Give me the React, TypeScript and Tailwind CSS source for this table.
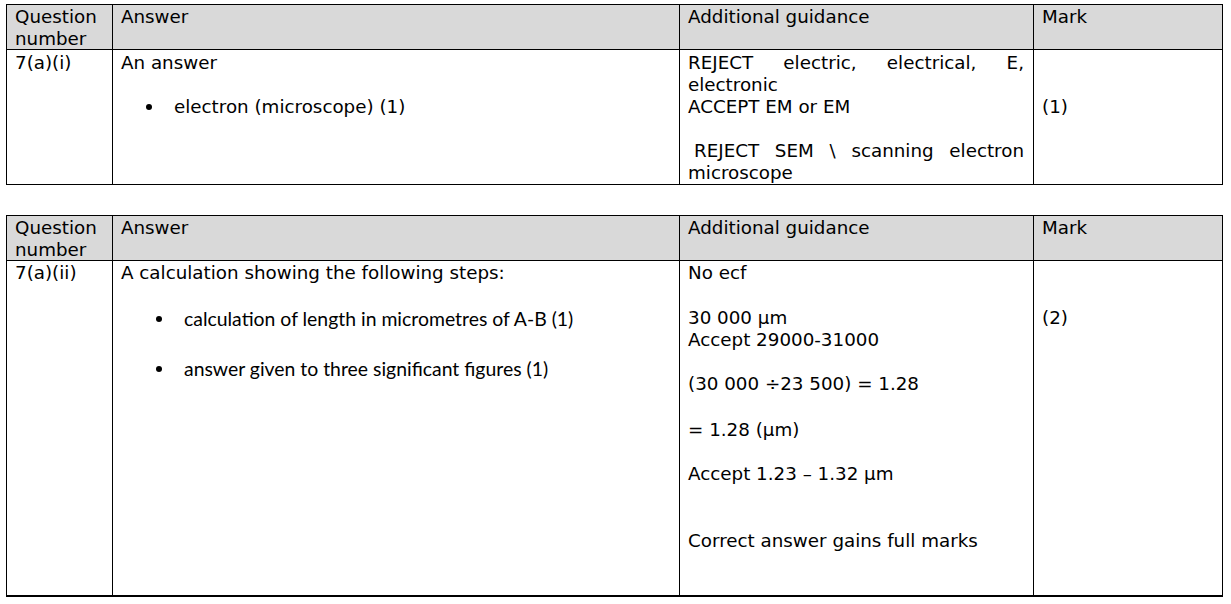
import React from "react";

const cell = "border-r border-b border-black px-[8px]";

function Header() {
  return (
    <>
      <div className={`${cell} bg-[#d9d9d9] h-[45px] pt-[1px] leading-[22px]`}>Question number</div>
      <div className={`${cell} bg-[#d9d9d9] h-[45px] pt-[1px] leading-[22px]`}>Answer</div>
      <div className={`${cell} bg-[#d9d9d9] h-[45px] pt-[1px] leading-[22px]`}>Additional guidance</div>
      <div className={`${cell} bg-[#d9d9d9] h-[45px] pt-[1px] leading-[22px]`}>Mark</div>
    </>
  );
}

function Bullet({ children, dotLeft, className }: { children: React.ReactNode; dotLeft: string; className?: string }) {
  return (
    <div className={`flex items-center h-[22px] ${className ?? ""}`}>
      <span className={`${dotLeft} w-[6px] h-[6px] rounded-full bg-black shrink-0`} />
      <span className="ml-[22px] leading-[22px] whitespace-nowrap">{children}</span>
    </div>
  );
}

export default function App() {
  return (
    <div className="bg-white w-[1231px] h-[604px] overflow-hidden text-black text-[18.3px] font-['DejaVu_Sans',sans-serif] pt-[4px]">
      {/* Table 1 */}
      <div className="ml-[6px] w-[1217px] border-l border-t border-black grid grid-cols-[106px_567px_354px_189px]">
        <Header />
        <div className={`${cell} h-[135px] pt-[2px] leading-[22px]`}>7(a)(i)</div>
        <div className={`${cell} h-[135px] pt-[2px] leading-[22px]`}>
          <div>An answer</div>
          <Bullet dotLeft="ml-[25px]" className="mt-[22px]">electron (microscope) (1)</Bullet>
        </div>
        <div className={`${cell} h-[135px] pt-[2px] leading-[22px] pr-[9px]`}>
          <div className="text-justify [text-align-last:justify]">REJECT electric, electrical, E,</div>
          <div>electronic</div>
          <div>ACCEPT EM or EM</div>
          <div className="mt-[22px] pl-[6px] text-justify [text-align-last:justify]">REJECT SEM \ scanning electron</div>
          <div>microscope</div>
        </div>
        <div className={`${cell} h-[135px] pt-[46px] leading-[22px]`}>(1)</div>
      </div>

      {/* Table 2 */}
      <div className="mt-[30px] ml-[6px] w-[1217px] border-l border-t border-black grid grid-cols-[106px_567px_354px_189px]">
        <Header />
        <div className="border-r border-b-2 border-black px-[8px] h-[336px] pt-[1px] leading-[22px]">7(a)(ii)</div>
        <div className="border-r border-b-2 border-black px-[8px] h-[336px] pt-[1px] leading-[22px]">
          <div>A calculation showing the following steps:</div>
          <div className="font-['Lato',sans-serif] text-[19.4px]">
            <Bullet dotLeft="ml-[35px]" className="mt-[24px]">calculation of length in micrometres of A-B (1)</Bullet>
            <Bullet dotLeft="ml-[35px]" className="mt-[28px]">answer given to three significant figures (1)</Bullet>
          </div>
        </div>
        <div className="border-r border-b-2 border-black px-[8px] h-[336px] pt-[1px] leading-[22px]">
          <div>No ecf</div>
          <div className="mt-[23px]">30 000 µm</div>
          <div>Accept 29000-31000</div>
          <div className="mt-[22px]">(30 000 ÷23 500) = 1.28</div>
          <div className="mt-[24px]">= 1.28 (µm)</div>
          <div className="mt-[22px]">Accept 1.23 – 1.32 µm</div>
          <div className="mt-[45px]">Correct answer gains full marks</div>
        </div>
        <div className="border-r border-b-2 border-black px-[8px] h-[336px] pt-[46px] leading-[22px]">(2)</div>
      </div>
    </div>
  );
}
